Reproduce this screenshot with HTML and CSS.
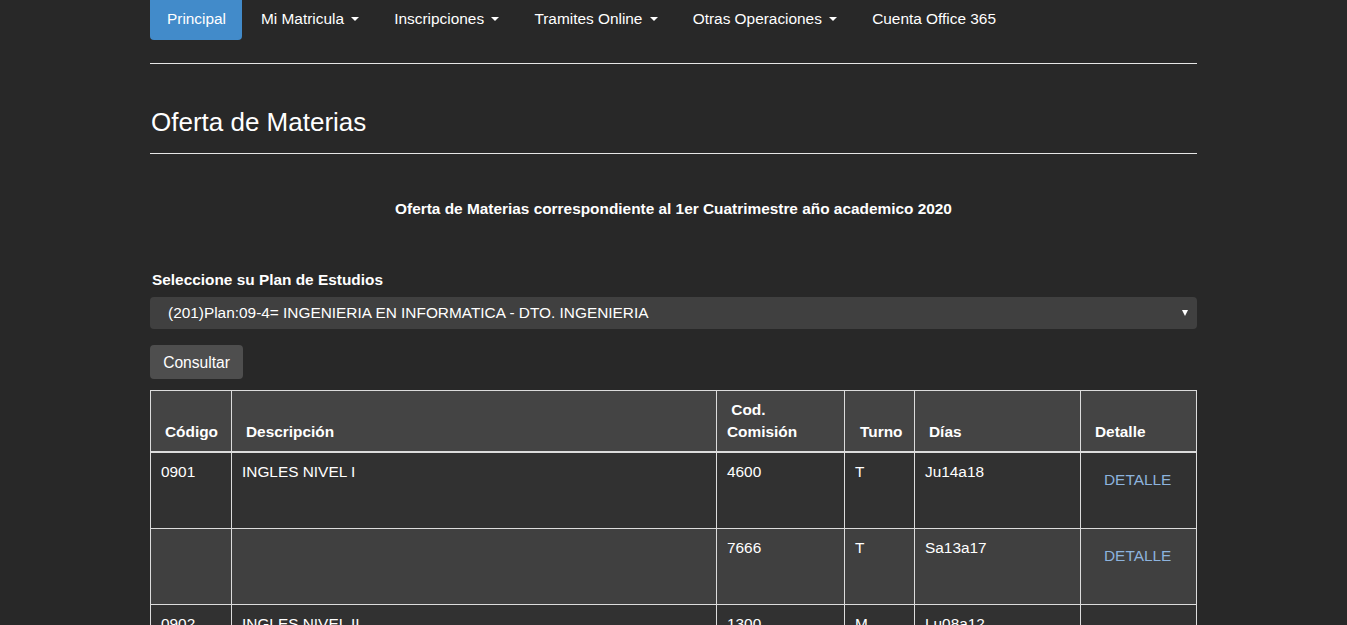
FILE: index.html
```html
<!DOCTYPE html>
<html lang="es">
<head>
<meta charset="utf-8">
<title>Oferta de Materias</title>
<link rel="stylesheet" href="styles.css">
</head>
<body>
<div class="container">
  <ul class="nav">
    <li class="nav-item active">Principal</li>
    <li class="nav-item">Mi Matricula <span class="caret"></span></li>
    <li class="nav-item">Inscripciones <span class="caret"></span></li>
    <li class="nav-item">Tramites Online <span class="caret"></span></li>
    <li class="nav-item">Otras Operaciones <span class="caret"></span></li>
    <li class="nav-item">Cuenta Office 365</li>
  </ul>
  <hr class="rule rule-top">
  <h1 class="title">Oferta de Materias</h1>
  <hr class="rule">
  <p class="subtitle">Oferta de Materias correspondiente al 1er Cuatrimestre año academico 2020</p>
  <label class="label" for="plan">Seleccione su Plan de Estudios</label>
  <div class="select-wrap">
    <select id="plan" class="select">
      <option>(201)Plan:09-4= INGENIERIA EN INFORMATICA - DTO. INGENIERIA</option>
    </select>
    <span class="select-arrow"></span>
  </div>
  <button class="btn">Consultar</button>
  <table class="table">
    <thead>
      <tr>
        <th class="c-cod">Código</th>
        <th class="c-desc">Descripción</th>
        <th class="c-com">&nbsp;Cod.<br>Comisión</th>
        <th class="c-turno">Turno</th>
        <th class="c-dias">Días</th>
        <th class="c-det">Detalle</th>
      </tr>
    </thead>
    <tbody>
      <tr>
        <td>0901</td><td>INGLES NIVEL I</td><td>4600</td><td>T</td><td>Ju14a18</td>
        <td class="det"><a class="link">DETALLE</a></td>
      </tr>
      <tr>
        <td></td><td></td><td>7666</td><td>T</td><td>Sa13a17</td>
        <td class="det"><a class="link">DETALLE</a></td>
      </tr>
      <tr>
        <td>0902</td><td>INGLES NIVEL II</td><td>1300</td><td>M</td><td>Lu08a12</td>
        <td class="det"><a class="link">DETALLE</a></td>
      </tr>
    </tbody>
  </table>
</div>
</body>
</html>
```
FILE: styles.css
```css
* { box-sizing: border-box; }
body {
  margin: 0;
  background: #282828;
  color: #fff;
  font-family: "Liberation Sans", Arial, sans-serif;
  font-size: 15.4px;
  line-height: 1.42857;
}
.container {
  width: 1047px;
  margin: 0 auto;
}
.nav {
  list-style: none;
  margin: 0;
  padding: 0;
  display: flex;
  gap: 2px;
}
.nav-item {
  height: 40px;
  padding: 0 16px 2px 17px;
  display: flex;
  align-items: center;
  color: #fff;
  white-space: pre;
}
.nav-item.active {
  background: #428bca;
  border-radius: 0 0 4px 4px;
}
.caret {
  display: inline-block;
  width: 0;
  height: 0;
  margin-left: 3px;
  border-top: 4px solid #fff;
  border-left: 4px solid transparent;
  border-right: 4px solid transparent;
}
.rule {
  border: 0;
  border-top: 1px solid #e6e6e6;
  margin: 0;
}
.rule-top { margin-top: 23px; }
.title {
  font-size: 26px;
  font-weight: normal;
  line-height: 1.1;
  margin: 44px 0 16px 1px;
}
.subtitle {
  font-size: 15.4px;
  font-weight: bold;
  text-align: center;
  line-height: 20px;
  margin: 45px 0 0;
}
.label {
  display: block;
  font-size: 15.4px;
  font-weight: bold;
  line-height: 20px;
  margin: 51px 0 7px 2px;
}
.select-wrap {
  position: relative;
}
.select {
  appearance: none;
  -webkit-appearance: none;
  display: block;
  width: 100%;
  height: 32px;
  padding: 0 18px;
  background: #404040;
  color: #fff;
  border: 0;
  border-radius: 4px;
  font-family: inherit;
  font-size: 15.4px;
}
.select-arrow {
  position: absolute;
  right: 9px;
  top: 13px;
  width: 0;
  height: 0;
  border-top: 6px solid #fff;
  border-left: 3px solid transparent;
  border-right: 3px solid transparent;
}
.btn {
  display: block;
  margin-top: 16px;
  width: 93px;
  height: 34px;
  padding: 2px 0 0;
  background: #4e4e4e;
  color: #fff;
  border: 0;
  border-radius: 4px;
  font-family: inherit;
  font-size: 15.6px;
}
.table {
  margin-top: 11px;
  width: 1046px;
  border-collapse: collapse;
  table-layout: fixed;
}
.table th, .table td {
  border: 1px solid #dcdcdc;
  text-align: left;
  padding: 8px 10px;
  vertical-align: top;
  font-size: 15.4px;
  line-height: 21px;
}
.table thead tr { background: #444; }
.table th {
  vertical-align: bottom;
  padding: 8px 14px;
  line-height: 22px;
  border-bottom: 2px solid #dcdcdc;
}
.c-cod { width: 81px; padding-left: 14px !important; padding-right: 4px !important; }
.c-desc { width: 485px; }
.c-com { width: 128px; padding-left: 10px !important; }
.c-turno { width: 70px; padding-left: 15px !important; padding-right: 4px !important; }
.c-dias { width: 166px; }
.c-det { width: 116px; }
.table tbody tr:nth-child(odd) { background: #313131; }
.table tbody tr:nth-child(even) { background: #404040; }
.table tbody td { height: 76px; }
.table tbody tr:first-child td { height: 77px; }
.table td.det { padding: 8px; }
.link {
  display: inline-block;
  padding: 8px 15px 6px;
  color: #8db3dd;
  line-height: 21px;
}
```
